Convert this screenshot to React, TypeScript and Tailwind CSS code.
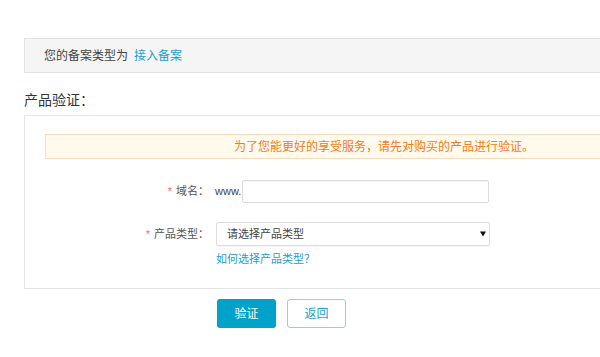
export default function App() {
  return (
    <div
      lang="zh-CN"
      className="w-[600px] h-[357px] overflow-hidden bg-white text-[12px] text-[#333] [text-spacing-trim:space-all]"
      style={{ fontFamily: '"Liberation Sans", "Noto Sans CJK SC", Arial, sans-serif' }}
    >
      <div className="w-[716px] pl-[24px] pt-[38px]">
        <div className="h-[35px] border border-[#e3e3e3] bg-[#f5f5f5] pl-[19px] flex items-center text-[#444]">
          您的备案类型为
          <a className="ml-[6px] text-[#1a9fd0] cursor-pointer">接入备案</a>
        </div>

        <h2 className="mt-[17px] mb-[5px] text-[14px] leading-[20px] text-[#333] font-normal">
          产品验证：
        </h2>

        <div className="border border-[#e5e5e5] pt-[18px] pl-[20px] pb-[21px]">
          <div className="h-[25px] border border-[#f6dcb8] bg-[#fffaeb] flex items-center justify-center text-[#f47a20]">
            <span className="ml-[8px]">为了您能更好的享受服务，请先对购买的产品进行验证。</span>
          </div>

          <div className="mt-[21px] flex items-center h-[23px] text-[11px]">
            <label className="w-[164px] text-right text-[#555]">
              <span className="text-[#f66] mr-[4px]">*</span>域名：
            </label>
            <span className="ml-[6px] text-[#444]">www.</span>
            <input
              type="text"
              className="ml-[1px] w-[247px] h-[23px] border border-[#dcdcdc] rounded-[2px] px-[6px] outline-none shadow-[inset_0_1px_1px_rgba(0,0,0,0.05)]"
            />
          </div>

          <div className="mt-[19px] flex items-center h-[24px] text-[11px]">
            <label className="w-[164px] text-right text-[#555]">
              <span className="text-[#f66] mr-[4px]">*</span>产品类型：
            </label>
            <div className="relative ml-[7px] w-[274px] h-[24px]">
              <select className="w-full h-full appearance-none border border-[#dcdcdc] rounded-[2px] pl-[10px] text-[11px] text-[#444] bg-white outline-none shadow-[0_1px_1px_rgba(0,0,0,0.04)]">
                <option>请选择产品类型</option>
              </select>
              <svg
                className="absolute right-[4px] top-[9px] pointer-events-none"
                width="6"
                height="6"
                viewBox="0 0 6 6"
              >
                <path d="M0 0.5 L6 0.5 L3 5.5 Z" fill="#111" />
              </svg>
            </div>
          </div>

          <div className="mt-[5px] ml-[171px] leading-[16px] text-[11px]">
            <a className="text-[#1a9fd0] cursor-pointer">如何选择产品类型？</a>
          </div>
        </div>

        <div className="mt-[10px] ml-[193px] flex gap-[11px]">
          <button className="w-[59px] h-[29px] rounded-[3px] bg-[#00a2ca] text-white text-[12px]">
            验证
          </button>
          <button className="w-[59px] h-[29px] rounded-[3px] border border-[#8fd1e6] bg-white text-[#1a9fd0] text-[12px]">
            返回
          </button>
        </div>
      </div>
    </div>
  );
}
